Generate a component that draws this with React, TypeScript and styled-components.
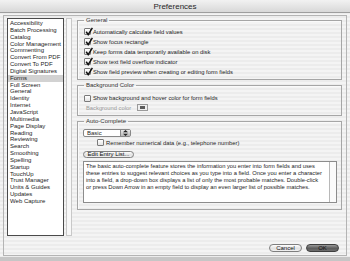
import styled, { createGlobalStyle } from 'styled-components';

const categories = [
  'Accessibility',
  'Batch Processing',
  'Catalog',
  'Color Management',
  'Commenting',
  'Convert From PDF',
  'Convert To PDF',
  'Digital Signatures',
  'Forms',
  'Full Screen',
  'General',
  'Identity',
  'Internet',
  'JavaScript',
  'Multimedia',
  'Page Display',
  'Reading',
  'Reviewing',
  'Search',
  'Smoothing',
  'Spelling',
  'Startup',
  'TouchUp',
  'Trust Manager',
  'Units & Guides',
  'Updates',
  'Web Capture',
];

const selectedCategory = 'Forms';

const generalOptions = [
  'Automatically calculate field values',
  'Show focus rectangle',
  'Keep forms data temporarily available on disk',
  'Show text field overflow indicator',
  'Show field preview when creating or editing form fields',
];

const description = [
  'The basic auto-complete feature stores the information you enter into form fields and uses',
  'these entries to suggest relevant choices as you type into a field. Once you enter a character',
  'into a field, a drop-down box displays a list of only the most probable matches. Double-click',
  'or press Down Arrow in an empty field to display an even larger list of possible matches.',
];

const GlobalStyle = createGlobalStyle`
  html, body {
    margin: 0;
    padding: 0;
  }
  body {
    width: 350px;
    height: 261px;
    overflow: hidden;
    font-family: 'Liberation Sans', Arial, sans-serif;
    color: #1c1c1c;
  }
`;

const Window = styled.div`
  width: 350px;
  height: 261px;
  box-sizing: border-box;
  display: flex;
  flex-direction: column;
  background: repeating-linear-gradient(
    to bottom,
    #ececec 0,
    #ececec 2px,
    #f4f4f4 2px,
    #f4f4f4 4px
  );
  border-bottom: 4px solid #c6c6c6;
`;

const TitleBar = styled.div`
  flex: none;
  height: 12px;
  display: flex;
  align-items: center;
  justify-content: center;
  background: linear-gradient(#f2f2f2, #d8d8d8);
  border-bottom: 1px solid #9e9e9e;
  font-size: 8px;
  color: #262626;
`;

const Panel = styled.div`
  flex: 1;
  margin: 2px 3px 1px 3px;
  padding: 2px 4px 1px 3px;
  border: 1px solid #b4b4b4;
  display: flex;
  flex-direction: column;
`;

const Body = styled.div`
  display: flex;
  align-items: flex-start;
`;

const List = styled.ul`
  flex: none;
  box-sizing: border-box;
  width: 57px;
  height: 218px;
  margin: 0;
  padding: 1px 0 0;
  list-style: none;
  background: #fff;
  border: 1px solid #4a4a4a;
`;

const ListItem = styled.li<{ $selected?: boolean }>`
  height: 6.85px;
  line-height: 6.85px;
  padding-left: 2px;
  font-size: 6px;
  white-space: nowrap;
  background: ${p => (p.$selected ? '#d2d2d2' : 'transparent')};
`;

const Splitter = styled.div`
  flex: none;
  box-sizing: border-box;
  width: 6px;
  height: 218px;
  margin-left: 2px;
  background: #f8f8f8;
  border: 1px solid #c8c8c8;
`;

const Column = styled.div`
  flex: none;
  width: 265px;
  margin-left: 5px;
  margin-top: -1px;
  display: flex;
  flex-direction: column;
  gap: 2px;
`;

const Group = styled.fieldset<{ $top: number; $bottom: number }>`
  margin: 0;
  min-width: 0;
  padding: ${p => p.$top}px 5px ${p => p.$bottom}px;
  border: 1px solid #a6a6a6;
  box-shadow: inset 1px 1px 0 #fafafa;
  display: flex;
  flex-direction: column;
  align-items: flex-start;
`;

const Legend = styled.legend`
  margin-left: 1px;
  padding: 0 2px;
  font-size: 6px;
  line-height: 7px;
  color: #333;
`;

const Row = styled.div<{ $height: number; $indent?: number }>`
  height: ${p => p.$height}px;
  display: flex;
  align-items: center;
  gap: 2px;
  padding-left: ${p => p.$indent ?? 0}px;
  font-size: 5.8px;
  white-space: nowrap;
`;

const Box = styled.span`
  flex: none;
  box-sizing: border-box;
  width: 7px;
  height: 7px;
  margin-left: 1px;
  border: 1px solid #7a7a7a;
  border-radius: 1px;
  background: linear-gradient(#ffffff, #e4e4e4);
  position: relative;
  svg {
    position: absolute;
    left: 0;
    top: -2px;
  }
`;

const MutedLabel = styled.span`
  color: #9a9a9a;
  padding-left: 3px;
  margin-right: 4px;
`;

const Swatch = styled.span`
  box-sizing: border-box;
  width: 11px;
  height: 7px;
  border: 1px solid #9a9a9a;
  background: #eeeeee;
  display: flex;
  align-items: center;
  justify-content: center;
  &::after {
    content: '';
    width: 5px;
    height: 3px;
    background: #5a5a5a;
  }
`;

const Select = styled.div`
  box-sizing: border-box;
  width: 48px;
  height: 8px;
  border: 1px solid #888;
  border-radius: 2px;
  background: #fff;
  display: flex;
  align-items: stretch;
  font-size: 6px;
`;

const SelectValue = styled.span`
  flex: 1;
  padding-left: 3px;
  line-height: 6px;
`;

const Stepper = styled.span`
  flex: none;
  width: 9px;
  background: linear-gradient(#e8e8e8, #b8b8b8);
  border-left: 1px solid #888;
  display: flex;
  align-items: center;
  justify-content: center;
`;

const PillButton = styled.button<{ $width: number; $default?: boolean }>`
  box-sizing: border-box;
  width: ${p => p.$width}px;
  height: 8px;
  padding: 0;
  border: 1px solid ${p => (p.$default ? '#3e3e3e' : '#7e7e7e')};
  border-radius: 4px;
  background: ${p =>
    p.$default
      ? 'linear-gradient(#9a9a9a, #5c5c5c 55%, #6e6e6e)'
      : 'linear-gradient(#ffffff, #e2e2e2 55%, #f0f0f0)'};
  font-family: inherit;
  font-size: 6px;
  line-height: 6px;
  color: #111;
`;

const EditButton = styled(PillButton)`
  margin-top: 3px;
  height: 7px;
  line-height: 5px;
`;

const TextBox = styled.div`
  box-sizing: border-box;
  width: 254px;
  height: 42px;
  margin-top: 3px;
  border: 1px solid #8c8c8c;
  background: #fff;
  display: flex;
`;

const TextBody = styled.p`
  flex: 1;
  margin: 0;
  padding: 1px 2px;
  font-size: 5.75px;
  line-height: 7px;
  white-space: nowrap;
  overflow: hidden;
`;

const ScrollTrack = styled.span`
  flex: none;
  width: 6px;
  border-left: 1px solid #b8b8b8;
  background: #fbfbfb;
`;

const ButtonRow = styled.div`
  margin-top: auto;
  display: flex;
  justify-content: flex-end;
  gap: 4px;
  padding: 0 3px 2px 0;
`;

const Check = () => (
  <svg width="8" height="9" viewBox="0 0 8 9">
    <path d="M1.2 4.8 L3.2 7.6 L7.4 0.8" fill="none" stroke="#111" strokeWidth="1.5" />
  </svg>
);

const Checkbox = ({ checked }: { checked?: boolean }) => (
  <Box>{checked && <Check />}</Box>
);

const Arrows = () => (
  <svg width="5" height="6" viewBox="0 0 5 6">
    <path d="M2.5 0 L5 2.3 H0 Z M2.5 6 L5 3.7 H0 Z" fill="#222" />
  </svg>
);

export default function App() {
  return (
    <>
      <GlobalStyle />
      <Window>
        <TitleBar>Preferences</TitleBar>
        <Panel>
          <Body>
            <List>
              {categories.map(name => (
                <ListItem key={name} $selected={name === selectedCategory}>
                  {name}
                </ListItem>
              ))}
            </List>
            <Splitter />
            <Column>
              <Group $top={2.5} $bottom={2}>
                <Legend>General</Legend>
                {generalOptions.map(option => (
                  <Row key={option} $height={10}>
                    <Checkbox checked />
                    {option}
                  </Row>
                ))}
              </Group>
              <Group $top={4.5} $bottom={3}>
                <Legend>Background Color</Legend>
                <Row $height={10}>
                  <Checkbox />
                  Show background and hover color for form fields
                </Row>
                <Row $height={9}>
                  <MutedLabel>Background color</MutedLabel>
                  <Swatch />
                </Row>
              </Group>
              <Group $top={4} $bottom={6}>
                <Legend>Auto-Complete</Legend>
                <Select>
                  <SelectValue>Basic</SelectValue>
                  <Stepper>
                    <Arrows />
                  </Stepper>
                </Select>
                <Row $height={11} $indent={13}>
                  <Checkbox />
                  Remember numerical data (e.g., telephone number)
                </Row>
                <EditButton $width={51}>Edit Entry List...</EditButton>
                <TextBox>
                  <TextBody>
                    {description.map((line, i) => (
                      <span key={i}>
                        {line}
                        <br />
                      </span>
                    ))}
                  </TextBody>
                  <ScrollTrack />
                </TextBox>
              </Group>
            </Column>
          </Body>
          <ButtonRow>
            <PillButton $width={33}>Cancel</PillButton>
            <PillButton $width={33} $default>
              OK
            </PillButton>
          </ButtonRow>
        </Panel>
      </Window>
    </>
  );
}
